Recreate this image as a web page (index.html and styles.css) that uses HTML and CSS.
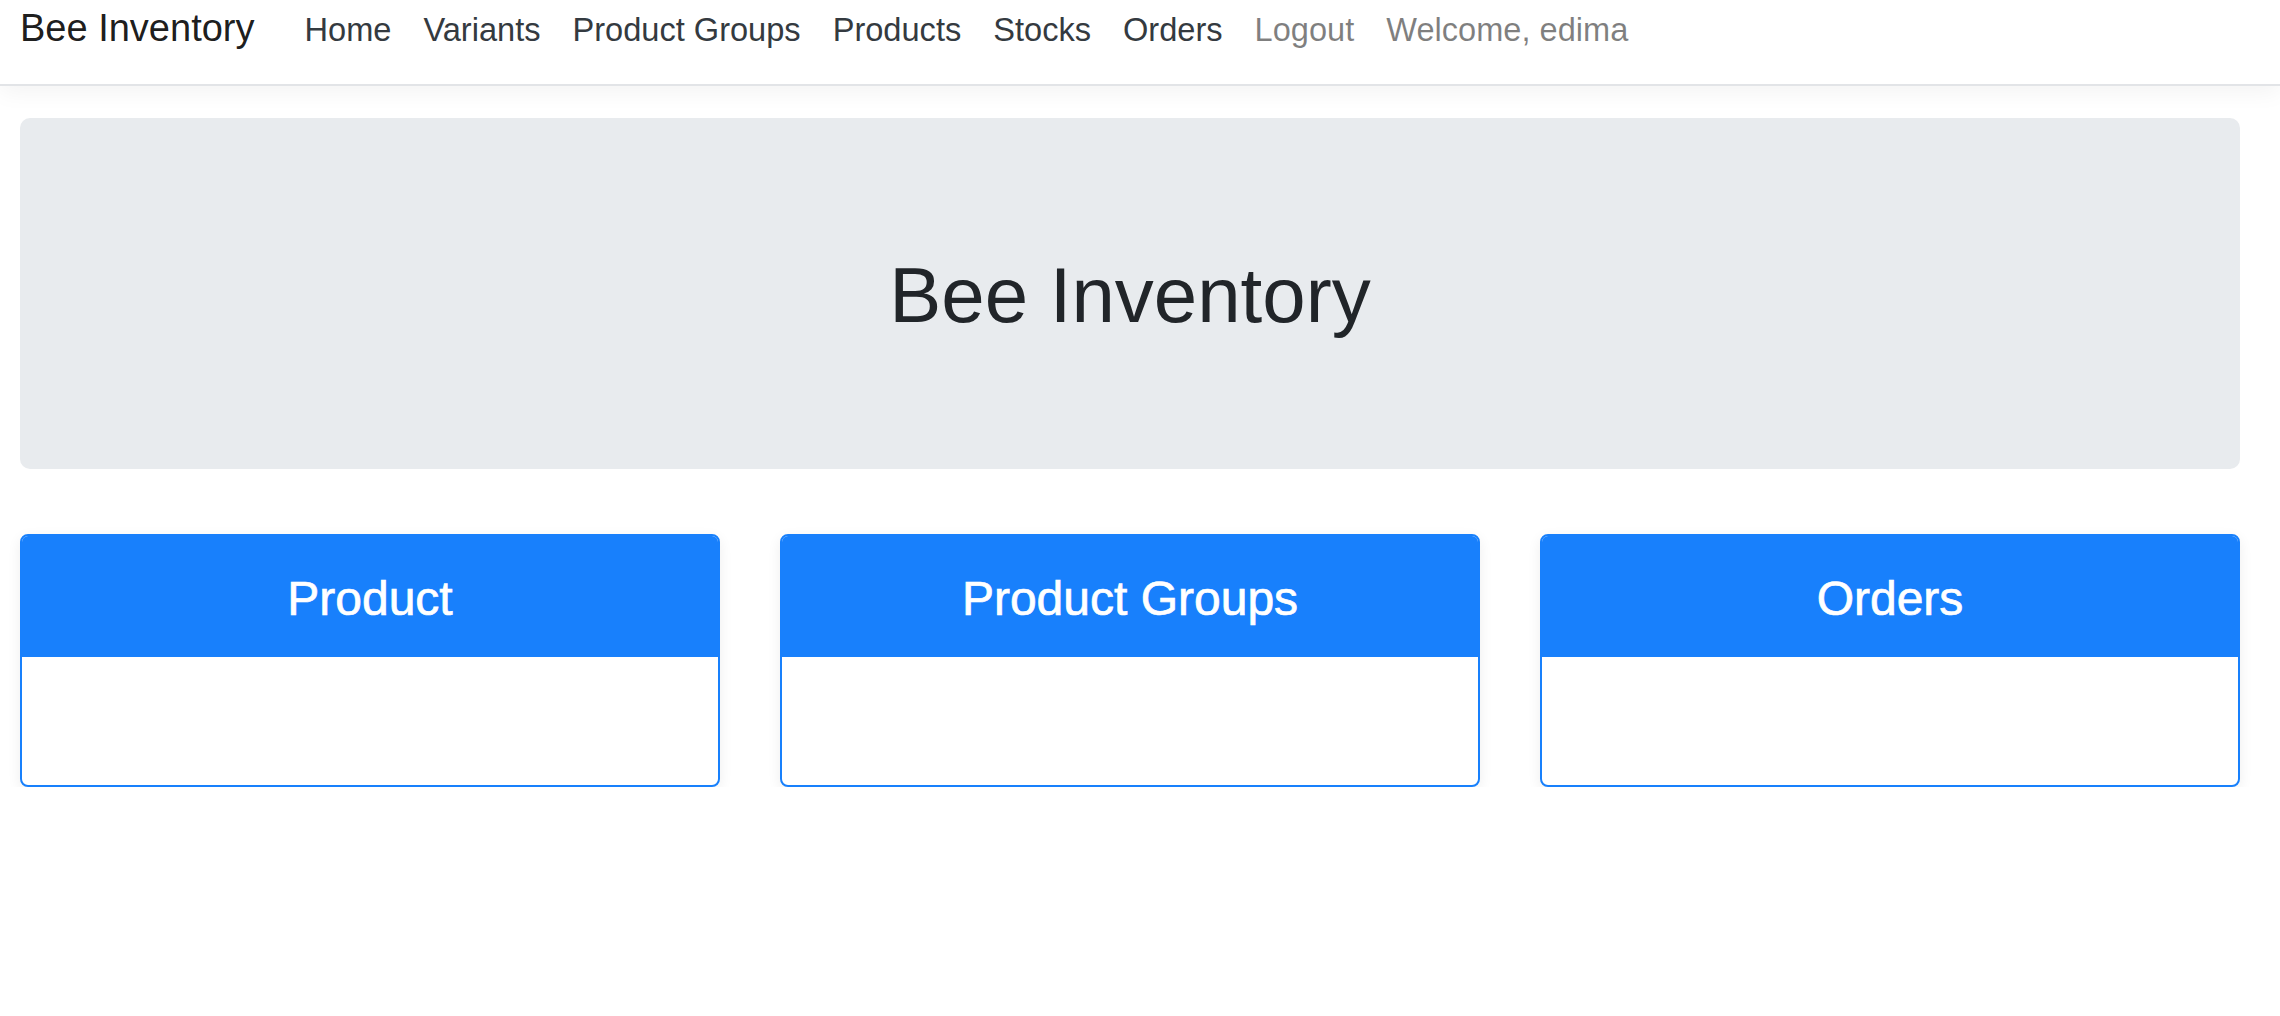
FILE: index.html
```html
<!DOCTYPE html>
<html lang="en">
<head>
<meta charset="utf-8">
<title>Bee Inventory</title>
<link rel="stylesheet" href="styles.css">
</head>
<body>
<nav class="navbar">
  <a class="brand" href="#">Bee Inventory</a>
  <ul class="nav">
    <li><a class="nav-link" href="#">Home</a></li>
    <li><a class="nav-link" href="#">Variants</a></li>
    <li><a class="nav-link" href="#">Product Groups</a></li>
    <li><a class="nav-link" href="#">Products</a></li>
    <li><a class="nav-link" href="#">Stocks</a></li>
    <li><a class="nav-link" href="#">Orders</a></li>
    <li><a class="nav-link muted" href="#">Logout</a></li>
    <li><span class="nav-link muted">Welcome, edima</span></li>
  </ul>
</nav>
<main class="container">
  <section class="jumbotron">
    <h1 class="display">Bee Inventory</h1>
  </section>
  <section class="cards">
    <div class="card">
      <div class="card-header"><h2 class="card-title">Product</h2></div>
      <div class="card-body"></div>
    </div>
    <div class="card">
      <div class="card-header"><h2 class="card-title">Product Groups</h2></div>
      <div class="card-body"></div>
    </div>
    <div class="card">
      <div class="card-header"><h2 class="card-title">Orders</h2></div>
      <div class="card-body"></div>
    </div>
  </section>
</main>
</body>
</html>
```

FILE: styles.css
```css
* { box-sizing: border-box; }

html, body {
  margin: 0;
  padding: 0;
  background: #fff;
  font-family: "Liberation Sans", Arial, Helvetica, sans-serif;
  color: #212529;
}

.navbar {
  height: 86px;
  display: flex;
  align-items: baseline;
  padding: 7px 20px 0 20px;
  background: #fff;
  border-bottom: 2px solid #e2e4e7;
  box-shadow: 0 6px 22px rgba(0, 0, 0, 0.05);
  position: relative;
  z-index: 1;
}

.brand {
  font-size: 38px;
  color: rgba(0, 0, 0, 0.9);
  text-decoration: none;
  margin-right: 34px;
  white-space: nowrap;
}

.nav {
  list-style: none;
  margin: 0;
  padding: 0;
  display: flex;
  align-items: baseline;
}

.nav-link {
  display: block;
  font-size: 32.6px;
  padding: 0 16px;
  color: #343a40;
  text-decoration: none;
  white-space: nowrap;
}

.nav-link.muted {
  color: rgba(0, 0, 0, 0.5);
}

.container {
  padding: 32px 40px 0 20px;
}

.jumbotron {
  height: 351px;
  background: #e8ebee;
  border-radius: 10px;
  display: flex;
  align-items: center;
  justify-content: center;
}

.display {
  margin: 0;
  font-size: 78px;
  font-weight: 400;
  line-height: 1.2;
  color: #212529;
  position: relative;
  top: 2px;
}

.cards {
  margin-top: 65px;
  display: grid;
  grid-template-columns: repeat(3, 1fr);
  column-gap: 60px;
}

.card {
  border: 2px solid #1880fc;
  border-radius: 8px;
  overflow: hidden;
  background: #fff;
  box-shadow: 0 4px 14px rgba(0, 0, 0, 0.07);
}

.card-header {
  height: 121px;
  background: #1880fc;
  display: flex;
  align-items: center;
  justify-content: center;
}

.card-title {
  margin: 0;
  font-size: 48px;
  font-weight: 400;
  line-height: 1.2;
  color: #fff;
  -webkit-text-stroke: 0.7px #fff;
  position: relative;
  top: 2px;
}

.card-body {
  height: 128px;
}
```
